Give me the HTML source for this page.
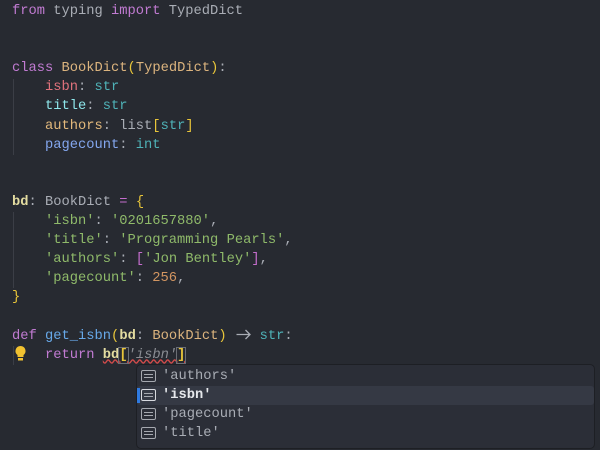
<!DOCTYPE html>
<html><head><meta charset="utf-8"><style>
html,body{margin:0;padding:0;background:#272a31;width:600px;height:450px;overflow:hidden}
.ed{position:absolute;left:12px;top:2px;font-family:"Liberation Mono",monospace;font-size:13.75px;line-height:19.1px;color:#a9adb5;white-space:pre}
.k{color:#c17bd2}.c{color:#dcb47e}.y{color:#e8c53a}.r{color:#e0727c}.t{color:#4fb3b8}.ti{color:#8ee6ea}
.a{color:#e3b97c}.p{color:#84a7ef}.s{color:#8fba6a}.n{color:#d29561}.v{color:#e3dca0;font-weight:bold}.f{color:#67a8e8}.m{color:#c46dcd}
.g{position:absolute;left:13px;width:1px;background:#3b3e46}
.pop{position:absolute;left:136px;top:364px;width:457px;height:83px;background:#2b2e37;border:1px solid #1d1f24;border-radius:5px;font-family:"Liberation Mono",monospace;font-size:13.75px;color:#a9adb5}
.row{position:absolute;left:0;right:0;height:19px;line-height:19px}
.row span{position:absolute;left:25px;top:0}
.ic{position:absolute;left:4px;top:3px;width:15px;height:12px;border:1.5px solid #a6a9b0;border-radius:2px;box-sizing:border-box}
.ic:before{content:"";position:absolute;left:2px;right:2px;top:2.5px;height:1.5px;background:#a6a9b0;box-shadow:0 3px 0 #a6a9b0}
.sel{background:#353944;border-radius:3px}
</style></head><body>
<div class="g" style="top:79px;height:76px"></div>
<div class="g" style="top:212px;height:76px"></div>
<div class="g" style="top:346px;height:19px"></div>
<div class="ed"><span class="k">from</span> typing <span class="k">import</span> TypedDict


<span class="k">class</span> <span class="c">BookDict</span><span class="y">(</span><span class="c">TypedDict</span><span class="y">)</span>:
    <span class="r">isbn</span>: <span class="t">str</span>
    <span class="ti">title</span>: <span class="t">str</span>
    <span class="a">authors</span>: list<span class="y">[</span><span class="t">str</span><span class="y">]</span>
    <span class="p">pagecount</span>: <span class="t">int</span>


<span class="v">bd</span>: BookDict <span class="m">=</span> <span class="y">{</span>
    <span class="s">'isbn'</span>: <span class="s">'0201657880'</span>,
    <span class="s">'title'</span>: <span class="s">'Programming Pearls'</span>,
    <span class="s">'authors'</span>: <span class="m">[</span><span class="s">'Jon Bentley'</span><span class="m">]</span>,
    <span class="s">'pagecount'</span>: <span class="n">256</span>,
<span class="y">}</span>

<span class="k">def</span> <span class="f">get_isbn</span><span class="y">(</span><span class="v">bd</span>: <span class="c">BookDict</span><span class="y">)</span> <svg width="16.5" height="12" viewBox="0 0 16.5 12" style="vertical-align:-1px"><path d="M1.5 6.5H15M10.5 2L15 6.5L10.5 11" stroke="#a9adb5" stroke-width="1.3" fill="none"/></svg> <span class="t">str</span>:
    <span class="k">return</span> <span class="v" style="text-decoration:underline wavy #d24b4b">bd<span class="y" style="outline:1px solid #6b6e75">[</span><span style="color:#8a8d93;font-style:italic;font-weight:normal">'isbn'</span><span class="y" style="outline:1px solid #6b6e75">]</span></span></div>
<svg style="position:absolute;left:14px;top:345px" width="13" height="17" viewBox="0 0 13 17"><path d="M6.5 1a5 5 0 0 0-3 9v2h6v-2a5 5 0 0 0-3-9z" fill="#f2c230"/><rect x="4" y="13" width="5" height="2.5" fill="#f2c230"/></svg>
<div class="pop">
<div class="row" style="top:2px"><div class="ic"></div><span>'authors'</span></div>
<div class="row sel" style="top:21px"><div style="position:absolute;left:0;top:2px;width:3px;height:15px;background:#2f7ae0"></div><div class="ic" style="border-color:#d8dadf"></div><span style="color:#e6e8ec;font-weight:bold">'isbn'</span></div>
<div class="row" style="top:40px"><div class="ic"></div><span>'pagecount'</span></div>
<div class="row" style="top:59px"><div class="ic"></div><span>'title'</span></div>
</div>
</body></html>
